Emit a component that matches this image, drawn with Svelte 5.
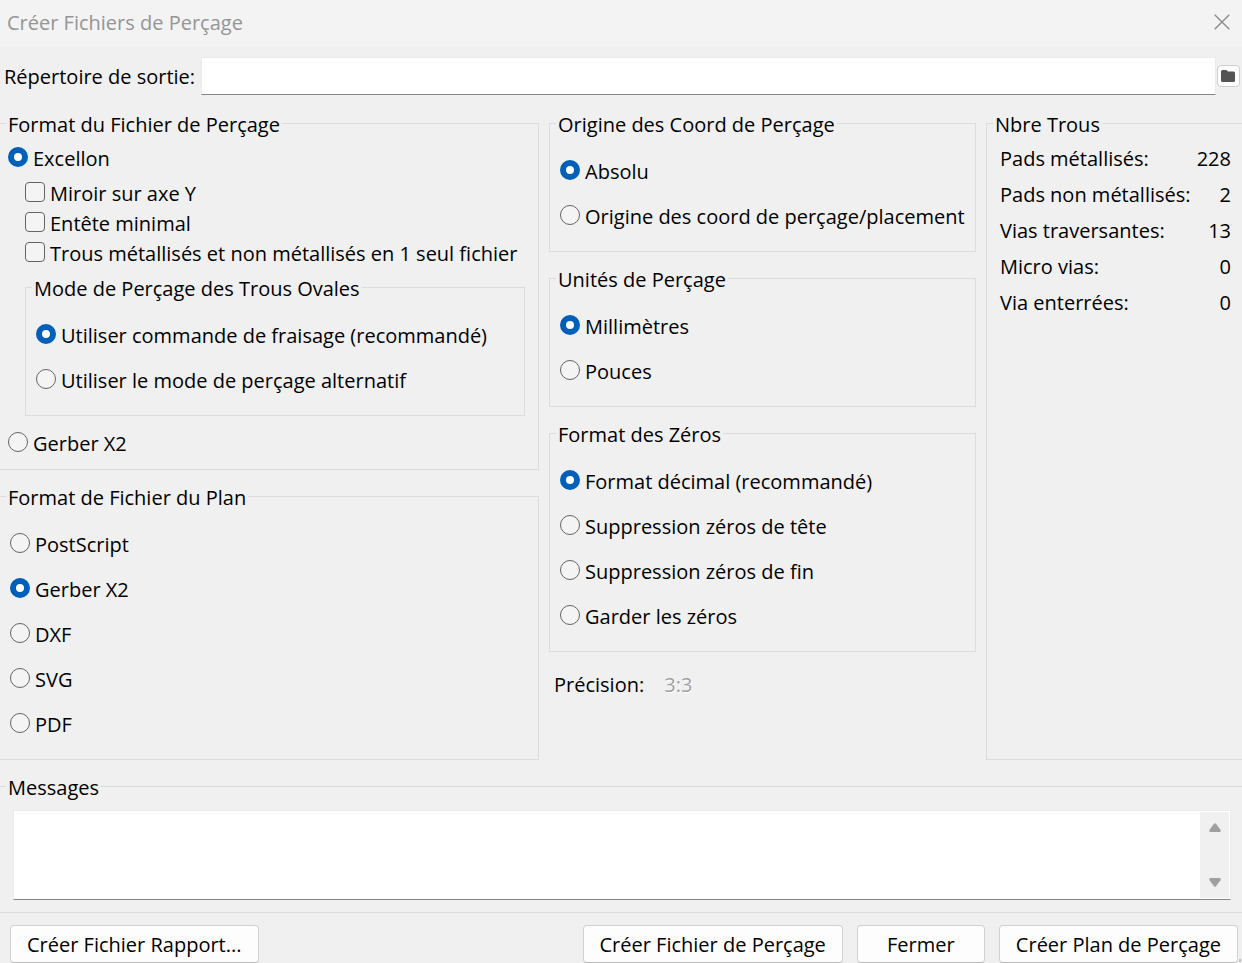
<script>
  let drillFormat = $state('excellon');
  let ovalMode = $state('route');
  let mapFormat = $state('gerber');
  let origin = $state('absolute');
  let units = $state('mm');
  let zeros = $state('decimal');
  let outputDir = $state('');
  let messages = $state('');

  const excellonOptions = $state([
    { label: 'Miroir sur axe Y', on: false },
    { label: 'Entête minimal', on: false },
    { label: 'Trous métallisés et non métallisés en 1 seul fichier', on: false }
  ]);
  const ovalModes = [
    ['route', 'Utiliser commande de fraisage (recommandé)'],
    ['alternate', 'Utiliser le mode de perçage alternatif']
  ];
  const mapFormats = [
    ['ps', 'PostScript'],
    ['gerber', 'Gerber X2'],
    ['dxf', 'DXF'],
    ['svg', 'SVG'],
    ['pdf', 'PDF']
  ];
  const origins = [
    ['absolute', 'Absolu'],
    ['aux', 'Origine des coord de perçage/placement']
  ];
  const unitChoices = [
    ['mm', 'Millimètres'],
    ['inch', 'Pouces']
  ];
  const zeroFormats = [
    ['decimal', 'Format décimal (recommandé)'],
    ['leading', 'Suppression zéros de tête'],
    ['trailing', 'Suppression zéros de fin'],
    ['keep', 'Garder les zéros']
  ];
  const holes = [
    ['Pads métallisés:', 228],
    ['Pads non métallisés:', 2],
    ['Vias traversantes:', 13],
    ['Micro vias:', 0],
    ['Via enterrées:', 0]
  ];
</script>

<div class="dialog">
  <header class="titlebar">
    <h1>Créer Fichiers de Perçage</h1>
    <button class="close" type="button" aria-label="Fermer la fenêtre">
      <svg width="16" height="16" viewBox="0 0 16 16" aria-hidden="true">
        <path d="M.7.7l14.6 14.6M15.3.7L.7 15.3" fill="none" stroke="#8c8c8c" stroke-width="1.4" />
      </svg>
    </button>
  </header>

  <div class="output">
    <label for="outdir">Répertoire de sortie:</label>
    <input id="outdir" class="field" type="text" bind:value={outputDir} />
    <button class="browse" type="button" aria-label="Parcourir">
      <svg width="14" height="12" viewBox="0 0 14 12" aria-hidden="true">
        <path d="M0 1.5Q0 0 1.5 0H5q.7 0 1.100.5L7 1.500h5.500Q14 1.500 14 3v7.500q0 1.500-1.500 1.500h-11Q0 12 0 10.500z" fill="#545454" />
      </svg>
    </button>
  </div>

  <div class="columns">
    <div class="column">
      <fieldset class="open-left">
        <legend>Format du Fichier de Perçage</legend>
        <div class="drill-body">
          <label class="choice compact">
            <input type="radio" name="drill" value="excellon" bind:group={drillFormat} />Excellon
          </label>
          <div class="nested">
            <div class="checks">
              {#each excellonOptions as option}
                <label class="choice check">
                  <input type="checkbox" bind:checked={option.on} />{option.label}
                </label>
              {/each}
            </div>
            <fieldset>
              <legend>Mode de Perçage des Trous Ovales</legend>
              <div class="body">
                {#each ovalModes as [value, label]}
                  <label class="choice"><input type="radio" name="oval" {value} bind:group={ovalMode} />{label}</label>
                {/each}
              </div>
            </fieldset>
          </div>
          <label class="choice compact">
            <input type="radio" name="drill" value="gerber" bind:group={drillFormat} />Gerber X2
          </label>
        </div>
      </fieldset>

      <fieldset class="open-left">
        <legend>Format de Fichier du Plan</legend>
        <div class="body">
          {#each mapFormats as [value, label]}
            <label class="choice"><input type="radio" name="map" {value} bind:group={mapFormat} />{label}</label>
          {/each}
        </div>
      </fieldset>
    </div>

    <div class="column">
      <fieldset>
        <legend>Origine des Coord de Perçage</legend>
        <div class="body">
          {#each origins as [value, label]}
            <label class="choice"><input type="radio" name="origin" {value} bind:group={origin} />{label}</label>
          {/each}
        </div>
      </fieldset>
      <fieldset>
        <legend>Unités de Perçage</legend>
        <div class="body">
          {#each unitChoices as [value, label]}
            <label class="choice"><input type="radio" name="units" {value} bind:group={units} />{label}</label>
          {/each}
        </div>
      </fieldset>
      <fieldset>
        <legend>Format des Zéros</legend>
        <div class="body">
          {#each zeroFormats as [value, label]}
            <label class="choice"><input type="radio" name="zeros" {value} bind:group={zeros} />{label}</label>
          {/each}
        </div>
      </fieldset>
      <div class="precision">
        <span>Précision:</span>
        <span class="disabled">3:3</span>
      </div>
    </div>

    <fieldset class="open-right">
      <legend>Nbre Trous</legend>
      <table>
        <tbody>
          {#each holes as [label, count]}
            <tr><th scope="row">{label}</th><td>{count}</td></tr>
          {/each}
        </tbody>
      </table>
    </fieldset>
  </div>

  <fieldset class="messages">
    <legend>Messages</legend>
    <div class="log">
      <textarea aria-label="Messages" bind:value={messages}></textarea>
      <div class="scrollbar">
        <button type="button" aria-label="Défiler vers le haut">
          <svg width="12" height="9" viewBox="0 0 12 9" aria-hidden="true">
            <path d="M5 .8Q6-.3 7 .8l4.500 6Q12.300 9 10.500 9h-9Q-.3 9 .5 6.800z" fill="#a0a0a0" />
          </svg>
        </button>
        <button type="button" aria-label="Défiler vers le bas">
          <svg width="12" height="9" viewBox="0 0 12 9" aria-hidden="true">
            <path d="M5 8.200Q6 9.300 7 8.200l4.500-6Q12.300 0 10.500 0h-9Q-.3 0 .5 2.200z" fill="#a0a0a0" />
          </svg>
        </button>
      </div>
    </div>
  </fieldset>

  <footer>
    <button class="push" type="button">Créer Fichier Rapport...</button>
    <span class="spacer"></span>
    <button class="push" type="button">Créer Fichier de Perçage</button>
    <button class="push short" type="button">Fermer</button>
    <button class="push" type="button">Créer Plan de Perçage</button>
    <span class="grip"></span>
  </footer>
</div>

<style>
  :global(body) {
    margin: 0;
    background: #f0f0f0;
  }
  .dialog,
  .dialog :global(*) {
    box-sizing: border-box;
  }
  .dialog {
    font: 20px/28px 'Open Sans', 'Noto Sans', sans-serif;
    color: #000;
    overflow-x: hidden;
  }
  button,
  input,
  textarea {
    font: inherit;
    color: inherit;
    margin: 0;
  }
  .titlebar {
    display: flex;
    align-items: center;
    justify-content: space-between;
    height: 47px;
    padding: 0 12px 2px 7px;
    background: #f3f3f3;
  }
  h1 {
    margin: 0;
    font-size: 20px;
    font-weight: 400;
    color: #959595;
  }
  .close {
    display: flex;
    padding: 0 0 2px;
    border: 0;
    background: none;
  }
  .output {
    display: flex;
    align-items: center;
    padding: 10px 2px 0 4px;
  }
  .output label {
    flex: 0 0 197px;
    padding-top: 2px;
    white-space: nowrap;
  }
  .field {
    flex: 1;
    min-width: 0;
    height: 38px;
    border: 1px solid #ebebeb;
    border-bottom-color: #858585;
    background: #fff;
  }
  .browse {
    display: flex;
    align-items: center;
    justify-content: center;
    width: 23px;
    height: 22px;
    margin-left: 1px;
    padding: 0 1px 0 0;
    border: 1px solid #d0d0d0;
    border-radius: 4px;
    background: #fdfdfd;
  }
  .columns {
    display: grid;
    grid-template-columns: minmax(0, 539fr) minmax(0, 427fr) minmax(0, 256fr);
    gap: 10px;
    padding-top: 15px;
  }
  .column {
    display: flex;
    flex-direction: column;
    gap: 13px;
  }
  fieldset {
    min-width: 0;
    margin: 0;
    padding: 0;
    border: 1px solid #dcdcdc;
  }
  .open-left {
    border-left: 0;
  }
  .open-right {
    border-right: 0;
  }
  legend {
    margin-left: 6px;
    padding: 3px 2px 0;
    line-height: 24px;
  }
  .body {
    padding: 12px 10px;
  }
  .drill-body {
    padding: 8px 13px 11px 8px;
  }
  .nested {
    padding-left: 17px;
  }
  .checks {
    padding: 6px 0 5px;
  }
  .nested fieldset {
    margin-bottom: 14px;
  }
  .choice {
    display: flex;
    align-items: center;
    gap: 5px;
    height: 45px;
    white-space: nowrap;
  }
  .choice.compact {
    height: 28px;
  }
  .choice.check {
    height: 30px;
  }
  .choice input {
    appearance: none;
    flex: none;
    width: 20px;
    height: 20px;
    margin-bottom: 4px;
    border: 1px solid #646464;
    background: #f4f4f4;
  }
  .choice input[type='radio'] {
    border-radius: 50%;
  }
  .choice input[type='radio']:checked {
    border: 6px solid #005fb8;
    background: #fff;
  }
  .choice input[type='checkbox'] {
    border-radius: 4px;
  }
  .choice input[type='checkbox']:checked {
    background: #005fb8;
  }
  .precision {
    display: flex;
    gap: 20px;
    padding: 6px 5px;
  }
  .disabled {
    color: #a0a0a0;
    text-shadow: 1px 1px #fff;
  }
  table {
    width: 100%;
    margin-top: 4px;
    border-collapse: collapse;
  }
  th,
  td {
    height: 36px;
    padding: 0;
    font-weight: 400;
    white-space: nowrap;
  }
  th {
    padding-left: 13px;
    text-align: left;
  }
  td {
    padding-right: 11px;
    text-align: right;
  }
  .messages {
    margin-top: 13px;
    border-width: 1px 0;
  }
  .log {
    display: flex;
    margin: 10px 11px 12px 13px;
    border: 1px solid #ebebeb;
    border-bottom-color: #858585;
    background: #fff;
  }
  textarea {
    flex: 1;
    min-width: 0;
    height: 88px;
    border: 0;
    background: #fff;
    resize: none;
  }
  .scrollbar {
    display: flex;
    flex-direction: column;
    justify-content: space-between;
    width: 29px;
    margin: 1px 1px 1px 0;
    background: #f0f0f0;
  }
  .scrollbar button {
    display: flex;
    align-items: center;
    justify-content: center;
    height: 31px;
    padding: 0;
    border: 0;
    background: none;
  }
  footer {
    position: relative;
    display: flex;
    gap: 14px;
    padding: 12px 4px 0 10px;
  }
  .spacer {
    flex: 1;
    margin-right: -14px;
  }
  .push {
    height: 38px;
    padding: 2px 16px 0;
    border: 1px solid #d0d0d0;
    border-bottom-color: #bcbcbc;
    border-radius: 4px;
    background: #fdfdfd;
    white-space: nowrap;
  }
  .short {
    width: 128px;
  }
  .grip {
    position: absolute;
    right: 1px;
    bottom: 1px;
    width: 2px;
    height: 3px;
    background: #bfbfbf;
  }
</style>
